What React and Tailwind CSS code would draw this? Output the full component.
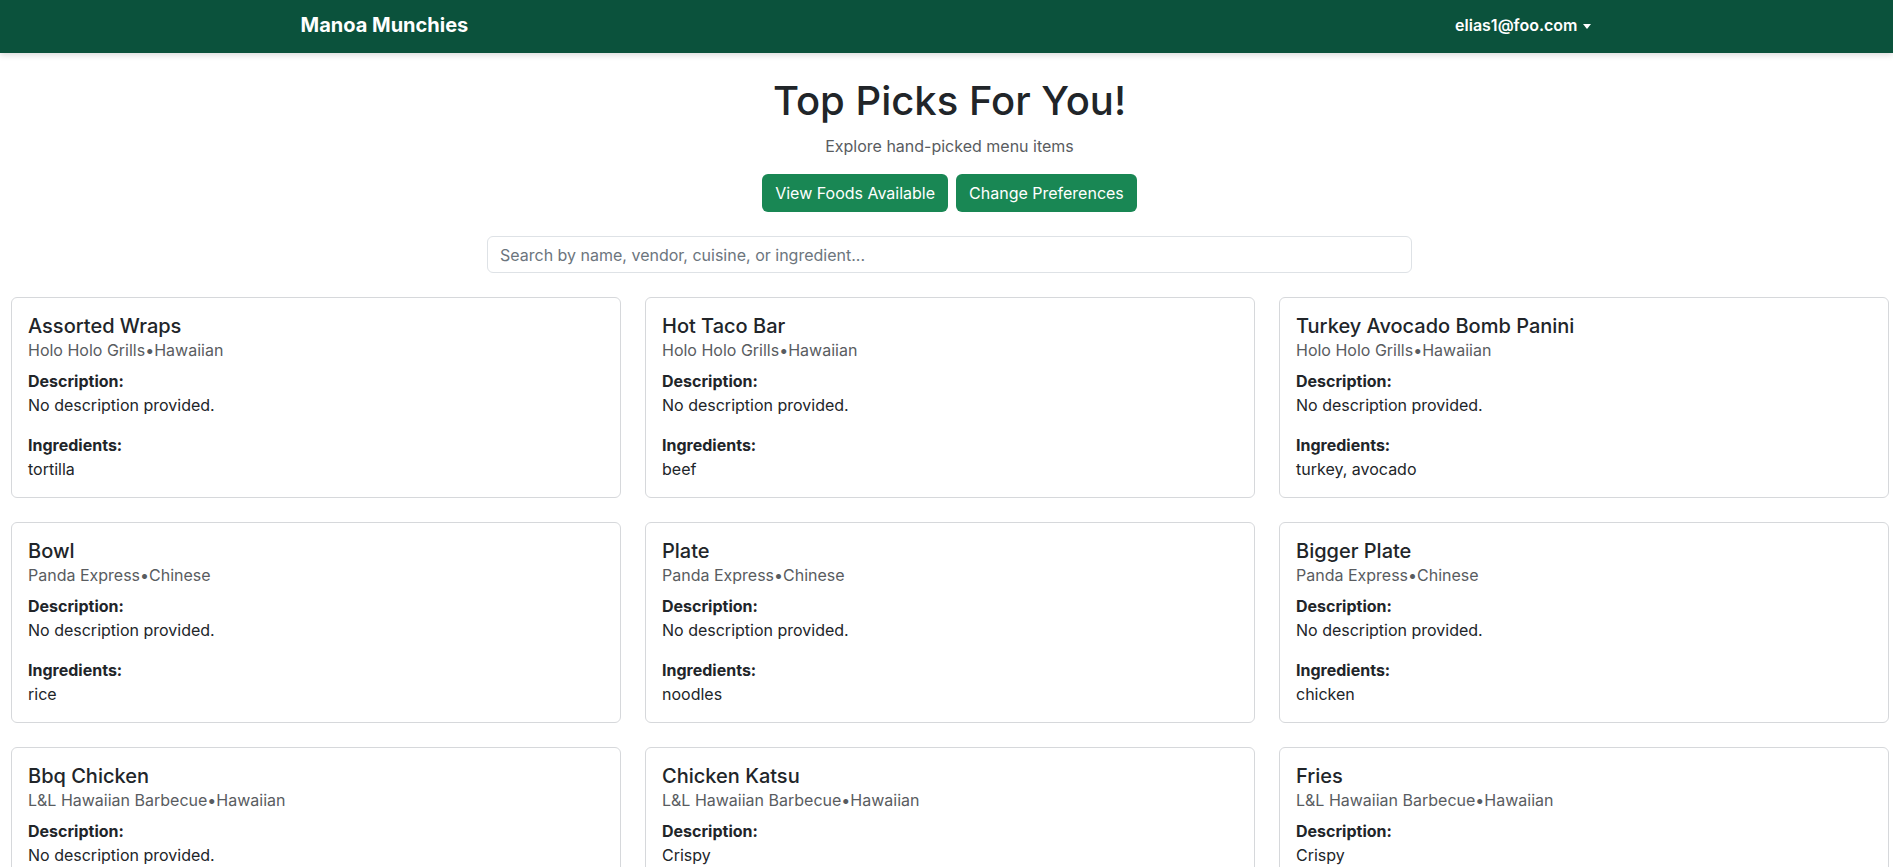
import { useState } from 'react'

const picks = [
    { name: 'Assorted Wraps', vendor: 'Holo Holo Grills', cuisine: 'Hawaiian', description: '', ingredients: 'tortilla' },
    { name: 'Hot Taco Bar', vendor: 'Holo Holo Grills', cuisine: 'Hawaiian', description: '', ingredients: 'beef' },
    { name: 'Turkey Avocado Bomb Panini', vendor: 'Holo Holo Grills', cuisine: 'Hawaiian', description: '', ingredients: 'turkey, avocado' },
    { name: 'Bowl', vendor: 'Panda Express', cuisine: 'Chinese', description: '', ingredients: 'rice' },
    { name: 'Plate', vendor: 'Panda Express', cuisine: 'Chinese', description: '', ingredients: 'noodles' },
    { name: 'Bigger Plate', vendor: 'Panda Express', cuisine: 'Chinese', description: '', ingredients: 'chicken' },
    { name: 'Bbq Chicken', vendor: 'L&L Hawaiian Barbecue', cuisine: 'Hawaiian', description: '', ingredients: 'chicken' },
    { name: 'Chicken Katsu', vendor: 'L&L Hawaiian Barbecue', cuisine: 'Hawaiian', description: 'Crispy', ingredients: 'chicken' },
    { name: 'Fries', vendor: 'L&L Hawaiian Barbecue', cuisine: 'Hawaiian', description: 'Crispy', ingredients: 'potato' },
]

function PickCard({ item }) {
    return (
        <div className="bg-white border border-[#d6d8db] rounded-[6px] p-4">
            <h5 className="text-[20px] leading-[24px] font-medium text-[#212529]">{item.name}</h5>
            <div className="text-[16px] leading-[24px] text-[#595c5f] mb-[7px]">
                {item.vendor}•{item.cuisine}
            </div>
            <div className="mb-4">
                <div className="font-bold leading-[24px]">Description:</div>
                <div className="leading-[24px]">{item.description || 'No description provided.'}</div>
            </div>
            <div>
                <div className="font-bold leading-[24px]">Ingredients:</div>
                <div className="leading-[24px]">{item.ingredients}</div>
            </div>
        </div>
    )
}

export default function App() {
    const [search, setSearch] = useState('')

    const filtered = picks.filter((p) =>
        `${p.name} ${p.vendor} ${p.cuisine} ${p.ingredients}`.toLowerCase().includes(search.toLowerCase())
    )

    return (
        <div className="min-h-screen bg-white text-[16px] text-[#212529] font-['Inter',sans-serif]">
            {/* navbar */}
            <nav className="bg-[#0b523c] h-[53px] shadow-[0_2px_6px_rgba(0,0,0,0.15)] relative z-10">
                <div className="max-w-[1320px] mx-auto px-3 h-full flex items-center justify-between">
                    <span className="text-white font-bold text-[20px] ml-[2px] -mt-[4px]">Manoa Munchies</span>
                    <button className="text-white font-semibold text-[16px] flex items-center mr-[4px] -mt-[3px]">
                        elias1@foo.com
                        <span className="ml-[5px] mt-[2px] w-0 h-0 border-t-[5px] border-t-white border-x-[4px] border-x-transparent" />
                    </button>
                </div>
            </nav>

            {/* header */}
            <div className="flex flex-col items-center pl-[6px] pt-[24px]">
                <h1 className="text-[40px] leading-[48px] font-medium">Top Picks For You!</h1>
                <p className="mt-[9px] text-[#595c5f] leading-[24px]">Explore hand-picked menu items</p>
                <div className="flex gap-2 mt-[16px]">
                    <button className="bg-[#198754] text-white rounded-[6px] px-[13px] py-[7px] leading-[24px]">View Foods Available</button>
                    <button className="bg-[#198754] text-white rounded-[6px] px-[13px] py-[7px] leading-[24px]">Change Preferences</button>
                </div>
                <input
                    value={search}
                    onChange={(e) => setSearch(e.target.value)}
                    placeholder="Search by name, vendor, cuisine, or ingredient..."
                    className="mt-[24px] w-[925px] h-[37px] border border-[#dee2e6] rounded-[6px] px-3 placeholder:text-[#6c757d] outline-none"
                />
            </div>

            {/* cards */}
            <div className="grid grid-cols-[repeat(3,610px)] gap-6 pl-[11px] mt-[24px] pb-6">
                {filtered.map((item) => (
                    <PickCard key={item.name} item={item} />
                ))}
            </div>
        </div>
    )
}
